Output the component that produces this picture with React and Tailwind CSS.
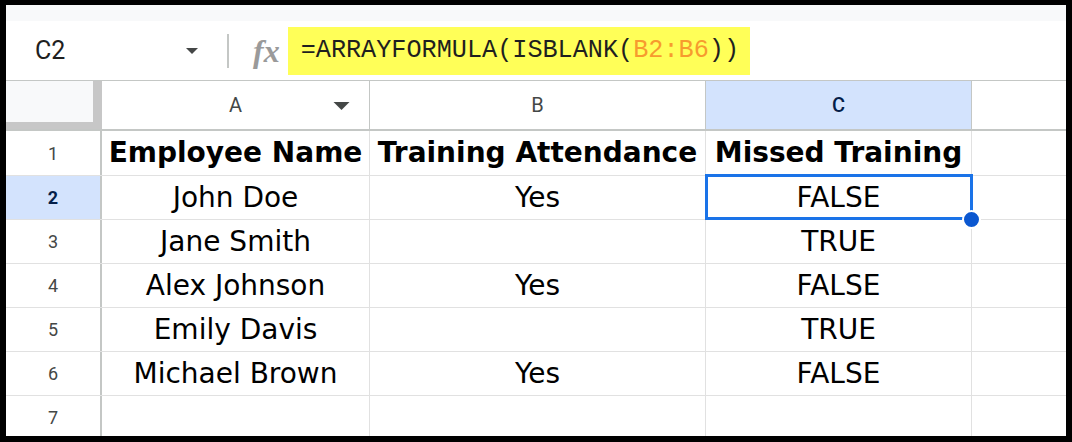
import React from "react";

const rows = [
  ["Employee Name", "Training Attendance", "Missed Training", true],
  ["John Doe", "Yes", "FALSE"],
  ["Jane Smith", "", "TRUE"],
  ["Alex Johnson", "Yes", "FALSE"],
  ["Emily Davis", "", "TRUE"],
  ["Michael Brown", "Yes", "FALSE"],
  ["", "", ""],
];

const cellFont = { fontFamily: '"DejaVu Sans", Verdana, sans-serif' };
const uiFont = { fontFamily: 'Roboto, "Liberation Sans", Arial, sans-serif' };

function Tri({ className }) {
  return (
    <svg className={className} viewBox="0 0 12 6" fill="#444746">
      <path d="M0 0 L12 0 L6 6 Z" />
    </svg>
  );
}

export default function App() {
  return (
    <div className="w-[1072px] h-[442px] bg-black pt-[5px] pl-[6px] pr-[6px] pb-[6px] overflow-hidden">
      <div className="w-full h-full bg-white flex flex-col overflow-hidden">
        <div className="h-[16px] bg-[#f8f9fa] shrink-0" />
        {/* formula bar */}
        <div className="h-[60px] shrink-0 flex items-center border-b border-[#c4c7c5]">
          <div className="w-[197px] flex items-center pl-[29px] pr-[5px]" style={uiFont}>
            <span className="text-[25px] text-[#1f1f1f] leading-none">C2</span>
            <Tri className="ml-auto w-[12px] h-[6px]" />
          </div>
          <div className="ml-[24px] w-[2px] h-[34px] bg-[#c4c7c5]" />
          <span
            className="ml-[24px] text-[32px] italic font-bold text-[#9a9a9a] leading-none"
            style={{ fontFamily: '"Liberation Serif", "Times New Roman", serif' }}
          >
            fx
          </span>
          <div
            className="ml-[8px] h-[48px] w-[462px] bg-[#ffff58] flex items-center pl-[13px] text-[25.2px] text-[#1f1f1f] leading-none"
            style={{ fontFamily: '"Liberation Mono", "Courier New", monospace' }}
          >
            =ARRAYFORMULA(ISBLANK(<span className="text-[#f79b2e]">B2:B6</span>))
          </div>
        </div>
        {/* column header */}
        <div className="h-[50px] shrink-0 flex border-b-2 border-[#c4c7c5]" style={uiFont}>
          <div className="w-[96px] shrink-0 flex flex-col">
            <div className="flex flex-1">
              <div className="w-[87px] bg-[#f8f9fa]" />
              <div className="w-[9px] bg-[#c7c7c7]" />
            </div>
            <div className="h-[7px] bg-[#c7c7c7]" />
          </div>
          <div className="w-[268px] shrink-0 border-r border-[#c4c7c5] relative flex items-center justify-center text-[20px] text-[#444746]">
            A
            <Tri className="absolute right-[19px] top-[21px] w-[17px] h-[8px]" />
          </div>
          <div className="w-[336px] shrink-0 border-r border-[#c4c7c5] flex items-center justify-center text-[20px] text-[#444746]">
            B
          </div>
          <div className="w-[266px] shrink-0 border-r border-[#c4c7c5] bg-[#d3e3fd] flex items-center justify-center text-[20px] font-medium text-[#041e49]">
            C
          </div>
          <div className="flex-1" />
        </div>
        {/* rows */}
        {rows.map((r, i) => {
          const bold = r[3];
          const sel = i === 1;
          return (
            <div key={i} className={`${i === 0 ? "h-[45px]" : "h-[44px]"} shrink-0 flex border-b border-[#e1e1e1]`}>
              <div
                className={`w-[96px] shrink-0 border-r-2 border-[#c4c7c5] flex items-center justify-center text-[18px] ${
                  sel ? "bg-[#d3e3fd] text-[#041e49] font-bold" : "text-[#444746]"
                }`}
                style={uiFont}
              >
                {i + 1}
              </div>
              {[r[0], r[1], r[2]].map((t, j) => (
                <div
                  key={j}
                  className={`${["w-[268px]", "w-[336px]", "w-[266px]"][j]} shrink-0 border-r border-[#e1e1e1] flex items-center justify-center text-[28px] text-black ${
                    bold ? "font-bold" : ""
                  } ${sel && j === 2 ? "relative" : ""}`}
                  style={cellFont}
                >
                  {t}
                  {sel && j === 2 && (
                    <>
                      <div className="absolute left-[-1px] top-[-2px] right-[-2px] bottom-[-1px] border-[3px] border-[#1a73e8]" />
                      <div className="absolute right-[-10px] bottom-[-10px] w-[19px] h-[19px] rounded-full bg-[#0b57d0] border-2 border-white" />
                    </>
                  )}
                </div>
              ))}
              <div className="flex-1" />
            </div>
          );
        })}
      </div>
    </div>
  );
}
